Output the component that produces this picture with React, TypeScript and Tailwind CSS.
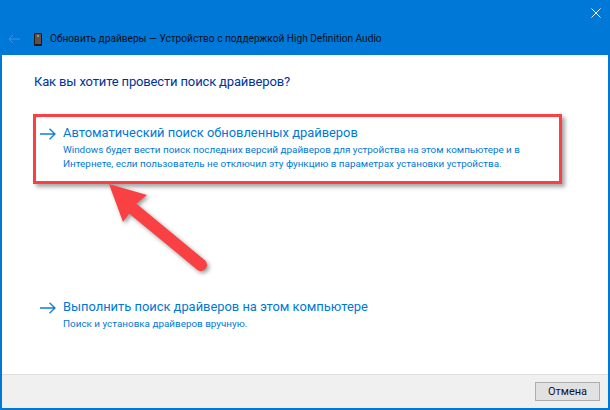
const font = "font-['Roboto',sans-serif]";

function CommandLink({ title, lines }: { title: string; lines: string[] }) {
  return (
    <div className="flex gap-[7px] text-[#0078d7]">
      <svg className="mt-[5px] shrink-0" width="16" height="12" viewBox="0 0 16 12" fill="none" stroke="#0f7fd8" strokeWidth="1.3">
        <path d="M0 6h15M9.500 0.700 15 6l-5.500 5.300" />
      </svg>
      <div>
        <div className="text-[12.900px] leading-[20px] whitespace-nowrap">{title}</div>
        {lines.map((line) => (
          <div key={line} className="text-[9.900px] leading-[14px] whitespace-nowrap">{line}</div>
        ))}
      </div>
    </div>
  );
}

export default function App() {
  return (
    <div className={`relative flex h-[410px] w-[610px] flex-col overflow-hidden bg-[#0078d7] ${font}`}>
      <div className="flex h-[26px] items-center justify-end pr-[9px]">
        <svg width="10" height="10" viewBox="0 0 10 10" stroke="#fff" strokeWidth="1">
          <path d="M0.500 0.500l9 9M9.500 0.500l-9 9" />
        </svg>
      </div>
      <div className="flex h-[29px] items-center pb-[3px] pl-[8px]">
        <svg width="12" height="10" viewBox="0 0 12 10" fill="none" stroke="#3f93dc" strokeWidth="1">
          <path d="M12 5H1M5 1 1 5l4 4" />
        </svg>
        <svg className="ml-[14px]" width="8" height="13" viewBox="0 0 8 13">
          <rect width="8" height="13" rx="1" fill="#1c1c1c" />
          <rect x="1" y="1" width="6" height="10" fill="#6b4a4a" />
          <rect x="3" y="2" width="2" height="2" fill="#35d04a" />
        </svg>
        <span className="ml-[8px] text-[10.150px] whitespace-nowrap text-[#06101c]">
          Обновить драйверы — Устройство с поддержкой High Definition Audio
        </span>
      </div>
      <div className="mx-[2px] mb-[2px] flex flex-1 flex-col bg-white">
        <div className="flex-1 pt-[17px] pl-[32px]">
          <div className="text-[13px] leading-[20px] tracking-[-0.15px] whitespace-nowrap text-[#003399]">Как вы хотите провести поиск драйверов?</div>
          <div className="mt-[31px] ml-[6px] flex flex-col gap-[126px]">
            <CommandLink
              title="Автоматический поиск обновленных драйверов"
              lines={[
                "Windows будет вести поиск последних версий драйверов для устройства на этом компьютере и в",
                "Интернете, если пользователь не отключил эту функцию в параметрах установки устройства.",
              ]}
            />
            <CommandLink title="Выполнить поиск драйверов на этом компьютере" lines={["Поиск и установка драйверов вручную."]} />
          </div>
        </div>
        <div className="flex h-[34px] items-center justify-end border-t border-[#dfdfdf] bg-[#f0f0f0] pr-[6px]">
          <button className="mr-[2px] h-[19px] w-[65px] border border-[#adadad] bg-[#e1e1e1] text-[11px] leading-none text-[#101030]">Отмена</button>
        </div>
      </div>

      {/* red annotation frame over the first link */}
      <div className="absolute top-[114px] left-[33px] h-[70px] w-[529px] border-[3px] border-[#f94144] shadow-[3px_3px_4px_rgba(0,0,0,0.35)]" />

      {/* red annotation arrow */}
      <svg className="absolute top-[180px] left-[90px]" width="140" height="100" viewBox="0 0 140 100" fill="none">
        <g style={{ filter: "drop-shadow(2px 2px 2px rgba(0,0,0,0.4))" }}>
          <path d="M19 4 57 15 46 24 33 42Z" fill="#f94144" />
          <path d="M42 28 111 85" stroke="#f94144" strokeWidth="12" strokeLinecap="round" />
        </g>
      </svg>
    </div>
  );
}
